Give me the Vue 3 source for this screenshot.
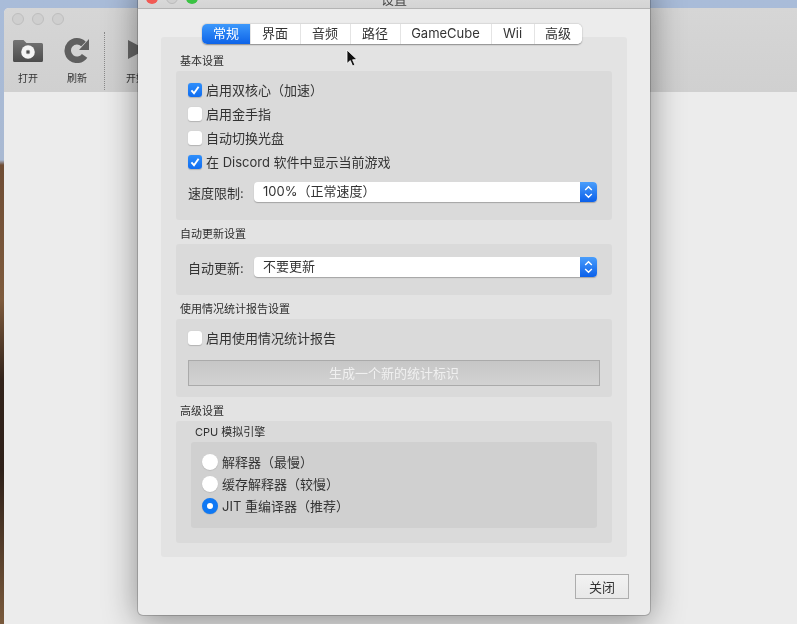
<script setup>
const tabs = [
  { label: '常规', width: 48, active: true },
  { label: '界面', width: 50 },
  { label: '音频', width: 50 },
  { label: '路径', width: 50 },
  { label: 'GameCube', width: 91 },
  { label: 'Wii', width: 43 },
  { label: '高级', width: 48 }
]
const basics = [
  { label: '启用双核心（加速）', on: true },
  { label: '启用金手指', on: false },
  { label: '自动切换光盘', on: false },
  { label: '在 Discord 软件中显示当前游戏', on: true }
]
const radios = [
  { label: '解释器（最慢）', on: false },
  { label: '缓存解释器（较慢）', on: false },
  { label: 'JIT 重编译器（推荐）', on: true }
]
</script>

<template>
  <div class="desktop">
    <section class="main-window">
      <header class="toolbar">
        <div class="lights">
          <i class="light-off"></i><i class="light-off"></i><i class="light-off"></i>
        </div>
        <div class="tools">
          <div class="tool tool-open">
            <svg width="32" height="26" viewBox="0 0 32 26">
              <defs>
                <linearGradient id="fold" x1="0" y1="0" x2="0" y2="1">
                  <stop offset="0" stop-color="#757575" /><stop offset="1" stop-color="#4c4c4c" />
                </linearGradient>
              </defs>
              <path d="M1 4.5a1.5 1.5 0 0 1 1.5-1.5h9l3 3H29.5a1.5 1.5 0 0 1 1.5 1.5V23.5a1.5 1.5 0 0 1-1.5 1.5H2.5a1.5 1.5 0 0 1-1.5-1.5z" fill="url(#fold)" />
              <circle cx="16" cy="15" r="6.8" fill="#f4f4f4" />
              <circle cx="16" cy="15" r="2.2" fill="#8a8a8a" />
              <circle cx="16" cy="15" r="0.9" fill="#333" />
            </svg>
            <span>打开</span>
          </div>
          <div class="tool tool-refresh">
            <svg width="28" height="26" viewBox="0 0 28 26">
              <path d="M20.5 7A9.25 9.25 0 1 0 21.6 18.8" fill="none" stroke="#5f5f5f" stroke-width="6.5" />
              <path d="M16 13L26 13L26 2Z" fill="#5f5f5f" />
            </svg>
            <span>刷新</span>
          </div>
          <div class="tool-sep"></div>
          <div class="tool tool-play">
            <svg width="24" height="26" viewBox="0 0 24 26">
              <path d="M4 3L22 12.5L4 22Z" fill="#666" />
            </svg>
            <span>开始</span>
          </div>
        </div>
      </header>
      <div class="main-body"></div>
    </section>

    <section class="dialog">
      <header class="dialog-title">
        <div class="dialog-lights">
          <i class="dl red"></i><i class="dl gray"></i><i class="dl green"></i>
        </div>
        <span>设置</span>
      </header>
      <div class="dialog-body">
        <nav class="tabs">
          <button
            v-for="t in tabs"
            :key="t.label"
            class="tab"
            :class="{ active: t.active }"
            :style="{ width: t.width + 'px' }"
          >{{ t.label }}</button>
        </nav>

        <div class="panel">
          <h3 class="group-title first">基本设置</h3>
          <div class="box box-basic">
            <label v-for="b in basics" :key="b.label" class="check-row">
              <span class="check" :class="{ on: b.on }">
                <svg v-if="b.on" width="14" height="14" viewBox="0 0 14 14">
                  <path d="M3.4 7.4L6 10.2L10.6 3.8" fill="none" stroke="#fff" stroke-width="1.9" />
                </svg>
              </span>
              <span class="row-text">{{ b.label }}</span>
            </label>
            <div class="combo-row combo-row-basic">
              <span class="combo-label">速度限制:</span>
              <div class="combo">
                <span class="combo-text">100%（正常速度）</span>
                <span class="combo-btn">
                  <svg width="17" height="20" viewBox="0 0 17 20">
                    <path d="M5.2 8L8.5 4.8L11.8 8M5.2 12L8.5 15.2L11.8 12" fill="none" stroke="#fff" stroke-width="1.4" />
                  </svg>
                </span>
              </div>
            </div>
          </div>

          <h3 class="group-title">自动更新设置</h3>
          <div class="box box-update">
            <div class="combo-row">
              <span class="combo-label">自动更新:</span>
              <div class="combo">
                <span class="combo-text">不要更新</span>
                <span class="combo-btn">
                  <svg width="17" height="20" viewBox="0 0 17 20">
                    <path d="M5.2 8L8.5 4.8L11.8 8M5.2 12L8.5 15.2L11.8 12" fill="none" stroke="#fff" stroke-width="1.4" />
                  </svg>
                </span>
              </div>
            </div>
          </div>

          <h3 class="group-title">使用情况统计报告设置</h3>
          <div class="box box-usage">
            <label class="check-row">
              <span class="check"></span>
              <span class="row-text">启用使用情况统计报告</span>
            </label>
            <div class="disabled-btn">生成一个新的统计标识</div>
          </div>

          <h3 class="group-title">高级设置</h3>
          <div class="box box-adv">
            <h4 class="cpu-title">CPU 模拟引擎</h4>
            <div class="inner">
              <label v-for="r in radios" :key="r.label" class="radio-row">
                <span class="radio" :class="{ on: r.on }"></span>
                <span class="row-text">{{ r.label }}</span>
              </label>
            </div>
          </div>
        </div>

        <div class="foot">
          <button class="close">关闭</button>
        </div>
      </div>
    </section>

    <svg class="cursor" width="14" height="20" viewBox="0 0 14 20">
      <path d="M1 1L1 14.5L4.3 11.6L6.6 17L8.9 16L6.6 10.8L11 10.6Z" fill="#111" stroke="#fff" stroke-width="0.8" />
    </svg>
  </div>
</template>

<style>
html, body { margin: 0; padding: 0; overflow: hidden; }
</style>

<style scoped>
.desktop {
  position: relative;
  width: 797px;
  height: 624px;
  overflow: hidden;
  font-family: "Inter", "Noto Sans CJK SC", sans-serif;
  color: #333;
  filter: blur(0.35px);
  background: linear-gradient(180deg, #a9bcd9 0, #a9b9d2 160px, #6f4d35 165px, #7e5b3d 300px, #32231b 380px, #2e2019 470px, #7a5a3c 624px);
}
.main-window {
  position: absolute;
  left: 4px;
  top: 8px;
  width: 793px;
  height: 616px;
  border-radius: 5px 0 0 0;
  overflow: hidden;
  display: flex;
  flex-direction: column;
  background: #ececec;
}
.toolbar {
  height: 84px;
  background: linear-gradient(180deg, #d6d6d6, #d0d0d0);
  flex: none;
}
.lights { display: flex; gap: 8px; padding: 5px 0 0 8px; height: 12px; }
.light-off {
  width: 10px;
  height: 10px;
  border-radius: 50%;
  border: 1px solid #bdbdbd;
  background: #cfcfcf;
  display: block;
}
.tools { display: flex; padding-top: 12px; font-size: 10px; color: #333; }
.tool { display: flex; flex-direction: column; align-items: center; gap: 9px; flex: none; }
.tool span { line-height: 12px; }
.tool-open { width: 32px; margin-left: 8px; }
.tool-refresh { width: 28px; margin-left: 19px; }
.tool-sep {
  width: 0;
  height: 58px;
  margin: -5px 0 0 13px;
  border-left: 1px dotted #8a8a8a;
}
.tool-play { width: 24px; margin-left: 19px; }
.main-body { flex: 1; background: #ececec; }

.dialog {
  position: absolute;
  left: 138px;
  top: -19px;
  width: 512px;
  border-radius: 0 0 5px 5px;
  background: #ececec;
  box-shadow: 0 0 0 1px rgba(0, 0, 0, 0.18), 0 6px 34px rgba(0, 0, 0, 0.42);
}
.dialog-title {
  position: relative;
  height: 27px;
  border-bottom: 1px solid #b4b4b4;
  background: linear-gradient(180deg, #e4e4e4, #d4d4d4);
  display: flex;
  align-items: center;
  justify-content: center;
  font-size: 13px;
  color: #444;
}
.dialog-title span { position: relative; top: 4px; }
.dialog-lights {
  position: absolute;
  left: 8px;
  top: 11px;
  display: flex;
  gap: 8px;
}
.dl { display: block; width: 12px; height: 12px; border-radius: 50%; }
.red { background: #f25a54; }
.gray { background: #d0d0d0; border: 1px solid #bbb; box-sizing: border-box; }
.green { background: #3ac343; }

.dialog-body { padding: 15px 0 16px 23px; }
.tabs {
  position: relative;
  z-index: 1;
  display: flex;
  width: 380px;
  height: 20px;
  margin: 0 0 -7px 41px;
  border-radius: 5px;
  background: #fff;
  box-shadow: 0 0.5px 1.5px rgba(0, 0, 0, 0.4);
  overflow: hidden;
}
.tab {
  padding: 0 1px 2px 0;
  border: 0;
  border-left: 1px solid #e4e4e4;
  background: #fff;
  font: inherit;
  font-size: 13px;
  line-height: 18px;
  color: #333;
}
.tab:first-child { border-left: 0; padding-right: 0; }
.tab.active {
  color: #fff;
  background: linear-gradient(180deg, #3c98fb, #0d63e8);
}

.panel {
  width: 466px;
  box-sizing: border-box;
  padding: 16px 15px 14px;
  border-radius: 3px;
  background: #e3e3e3;
}
.group-title {
  margin: 6px 0 2px 4px;
  font-size: 11px;
  line-height: 16px;
  font-weight: 400;
  color: #2f2f2f;
}
.group-title.first { margin-top: 0; }
.box { border-radius: 3px; background: #dadada; box-sizing: border-box; }
.box-basic { height: 149px; padding: 7px 15px 0 12px; }
.box-update { height: 51px; padding: 13px 15px 0 12px; }
.box-usage { height: 78px; padding: 7px 12px 0 12px; }
.box-adv { height: 122px; padding: 3px 15px 0 15px; }

.check-row {
  display: flex;
  align-items: center;
  height: 24px;
  font-size: 13px;
  color: #333;
}
.row-text { padding-bottom: 2px; }
.check {
  flex: none;
  width: 14px;
  height: 14px;
  margin-right: 4px;
  border-radius: 3px;
  background: #fff;
  box-shadow: 0 0.5px 1px rgba(0, 0, 0, 0.18);
  display: flex;
}
.check.on { background: linear-gradient(180deg, #2f8ffb, #0f6cf0); }

.combo-row { display: flex; align-items: center; font-size: 13px; }
.combo-row-basic { margin-top: 8px; }
.combo-label { width: 66px; flex: none; }
.combo {
  flex: 1;
  height: 20px;
  display: flex;
  justify-content: space-between;
  border-radius: 4px;
  background: #fff;
  overflow: hidden;
  box-shadow: 0 1px 1px rgba(0, 0, 0, 0.25);
}
.combo-text { padding-left: 9px; line-height: 18px; color: #333; }
.combo-btn {
  width: 17px;
  height: 20px;
  display: block;
  background: linear-gradient(180deg, #4a9efb, #0b60ea);
}

.disabled-btn {
  height: 26px;
  margin-top: 10px;
  box-sizing: border-box;
  border: 1px solid #aaa;
  background: linear-gradient(180deg, #c6c6c6, #d2d2d2);
  color: #f0f0f0;
  font-size: 13px;
  line-height: 24px;
  text-align: center;
}

.cpu-title {
  margin: 0 0 2px 4px;
  font-size: 11px;
  line-height: 16px;
  font-weight: 400;
  color: #2f2f2f;
}
.inner {
  height: 86px;
  box-sizing: border-box;
  padding: 9px 0 0 11px;
  border-radius: 3px;
  background: #d0d0d0;
}
.radio-row {
  display: flex;
  align-items: center;
  height: 22px;
  font-size: 13px;
  color: #333;
}
.radio {
  flex: none;
  width: 16px;
  height: 16px;
  margin-right: 4px;
  border-radius: 50%;
  background: #fff;
  box-shadow: 0 0.5px 1px rgba(0, 0, 0, 0.18);
  box-sizing: border-box;
}
.radio.on { background: #fff; border: 5px solid #0f78f4; }

.foot { display: flex; justify-content: flex-end; padding: 17px 21px 0 0; }
.close {
  width: 54px;
  height: 25px;
  padding: 0;
  border: 1px solid #adadad;
  background: linear-gradient(180deg, #f2f2f2, #e8e8e8);
  font: inherit;
  font-size: 13px;
  color: #333;
}
.cursor { position: absolute; left: 346px; top: 49px; }
</style>
